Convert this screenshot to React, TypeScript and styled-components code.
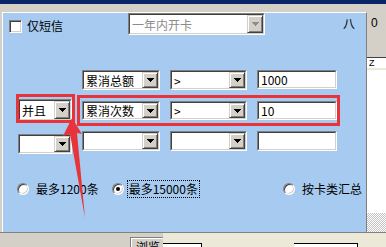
import React from 'react';
import styled, { createGlobalStyle } from 'styled-components';

const GlobalStyle = createGlobalStyle`
  html, body {
    margin: 0;
    padding: 0;
    background: #d4d0c8;
  }

  body {
    font-family: "Noto Sans CJK SC", "Liberation Sans", sans-serif;
    font-size: 12px;
    color: #000;
  }
`;

const Screen = styled.div`
  position: relative;
  width: 386px;
  height: 247px;
  overflow: hidden;
  display: flex;
  flex-direction: column;
  background: #d4d0c8;
`;

const TitleBar = styled.div`
  height: 4px;
  background: #0a246a;
`;

const Middle = styled.div`
  display: flex;
  height: 228px;
`;

const PanelArea = styled.div`
  width: 367px;
  padding: 8px 0 0 2px;
  box-sizing: border-box;
`;

const Panel = styled.div`
  height: 220px;
  box-sizing: border-box;
  background: #a6caf0;
  border-left: 1px solid #fff;
  border-top: 1px solid #fff;
  border-right: 1px solid #808080;
`;

const TopRow = styled.div`
  display: flex;
  align-items: center;
  height: 22px;
  padding-left: 6px;
`;

const CheckBox = styled.span`
  width: 13px;
  height: 13px;
  margin-top: 4px;
  box-sizing: border-box;
  background: #fff;
  border: 1px solid;
  border-color: #808080 #fff #fff #808080;
  box-shadow: inset 1px 1px #404040, inset -1px -1px #d4d0c8;
`;

const CheckLabel = styled.span`
  width: 101px;
  margin-left: 5px;
  margin-top: 4px;
  line-height: 16px;
`;

const EightMark = styled.span`
  margin-left: 78px;
  margin-top: -1px;
  line-height: 16px;
`;

const Sunken = styled.div<{ $w: number; $h: number; $dy?: number }>`
  width: ${({ $w }) => $w}px;
  height: ${({ $h }) => $h}px;
  margin-top: ${({ $dy }) => $dy ?? 0}px;
  box-sizing: border-box;
  flex-shrink: 0;
  background: #fff;
  border: 1px solid;
  border-color: #808080 #fff #fff #808080;
  display: flex;
`;

const SunkenInner = styled.div`
  flex: 1;
  display: flex;
  align-items: center;
  min-width: 0;
  border: 1px solid;
  border-color: #404040 #d4d0c8 #d4d0c8 #404040;
`;

const FieldText = styled.span<{ $disabled?: boolean }>`
  flex: 1;
  padding-left: 2px;
  line-height: 15px;
  white-space: nowrap;
  color: ${({ $disabled }) => ($disabled ? '#8c8c8c' : '#000')};
`;

const DropButton = styled.span`
  width: 16px;
  align-self: stretch;
  box-sizing: border-box;
  flex-shrink: 0;
  display: flex;
  align-items: center;
  justify-content: center;
  background: #d4d0c8;
  border: 1px solid;
  border-color: #d4d0c8 #404040 #404040 #d4d0c8;
  box-shadow: inset 1px 1px #fff, inset -1px -1px #808080;
`;

const ConditionRow = styled.div<{ $top: number }>`
  display: flex;
  align-items: flex-start;
  gap: 10px;
  margin-top: ${({ $top }) => $top}px;
  padding-left: 15px;
`;

const Slot = styled.div`
  width: 54px;
  flex-shrink: 0;
`;

const RadioRow = styled.div`
  display: flex;
  align-items: center;
  height: 16px;
  margin-top: 27px;
  padding-left: 14px;
`;

const RadioItem = styled.label<{ $left?: number }>`
  display: flex;
  align-items: center;
  margin-left: ${({ $left }) => $left ?? 0}px;
`;

const RadioDot = styled.span<{ $checked?: boolean }>`
  position: relative;
  width: 12px;
  height: 12px;
  box-sizing: border-box;
  border-radius: 50%;
  background: #fff;
  border: 1px solid;
  border-color: #808080 #fff #fff #808080;
  box-shadow: inset 1px 1px #404040, inset -1px -1px #d4d0c8;

  &::after {
    content: '';
    display: ${({ $checked }) => ($checked ? 'block' : 'none')};
    position: absolute;
    left: 3px;
    top: 3px;
    width: 4px;
    height: 4px;
    border-radius: 50%;
    background: #000;
  }
`;

const RadioText = styled.span<{ $focused?: boolean }>`
  margin-left: ${({ $focused }) => ($focused ? 3 : 5)}px;
  padding: 0 1px;
  line-height: 16px;
  border: 1px dotted ${({ $focused }) => ($focused ? '#000' : 'transparent')};
`;

const RightStrip = styled.div`
  width: 19px;
  display: flex;
  flex-direction: column;
`;

const StripTop = styled.div`
  height: 53px;
  padding: 12px 0 0 4px;
  box-sizing: border-box;
  font-family: "Liberation Sans", sans-serif;
  font-size: 12px;
`;

const StripList = styled.div`
  flex: 1;
  background: #fff;
  border-top: 1px solid #404040;
`;

const StripHead = styled.div`
  height: 10px;
  padding-left: 2px;
  border-bottom: 2px solid #ece9d8;
  font-family: "Liberation Sans", sans-serif;
  font-size: 9px;
  line-height: 10px;
`;

const StripChecker = styled.div`
  height: 19px;
  background: repeating-conic-gradient(#c4c4c4 0 25%, #fff 0 50%) 0 0 / 2px 2px;
`;

const BottomBar = styled.div`
  display: flex;
  height: 15px;
  box-sizing: border-box;
  border-top: 1px solid #808080;
`;

const BottomGrey = styled.div`
  width: 130px;
`;

const GroupTab = styled.div`
  width: 32px;
  margin-top: 4px;
  border-top: 1px solid #808080;
  border-left: 1px solid #808080;
  box-shadow: inset 1px 1px #fff;
`;

const GroupLabel = styled.span`
  display: inline-block;
  margin: -6px 0 0 4px;
  padding: 0 1px;
  background: #d4d0c8;
  line-height: 14px;
`;

const BeigeArea = styled.div`
  flex: 1;
  display: flex;
  background: #ece9d8;
`;

const WhiteBox = styled.div<{ $w: number; $left: number }>`
  width: ${({ $w }) => $w}px;
  margin-left: ${({ $left }) => $left}px;
  margin-top: 10px;
  background: #fff;
  border-top: 1px solid #000;
  border-right: 1px solid #000;
`;

const Overlay = styled.svg`
  position: absolute;
  left: 0;
  top: 0;
  pointer-events: none;
`;

function Combo({ w, h = 21, dy, text, disabled }: { w: number; h?: number; dy?: number; text?: string; disabled?: boolean }) {
  return (
    <Sunken $w={w} $h={h} $dy={dy}>
      <SunkenInner>
        <FieldText $disabled={disabled}>{text}</FieldText>
        <DropButton>
          <svg width='7' height='4' viewBox='0 0 7 4'>
            <path d='M0 0h7v1H0zM1 1h5v1H1zM2 2h3v1H2zM3 3h1v1H3z' fill={disabled ? '#8c8c8c' : '#000'} />
          </svg>
        </DropButton>
      </SunkenInner>
    </Sunken>
  );
}

function TextBox({ w, h = 20, dy, text }: { w: number; h?: number; dy?: number; text?: string }) {
  return (
    <Sunken $w={w} $h={h} $dy={dy}>
      <SunkenInner>
        <FieldText>{text}</FieldText>
      </SunkenInner>
    </Sunken>
  );
}

export default function App() {
  return (
    <>
      <GlobalStyle />
      <Screen>
        <TitleBar />
        <Middle>
          <PanelArea>
            <Panel>
              <TopRow>
                <CheckBox />
                <CheckLabel>仅短信</CheckLabel>
                <Combo w={137} h={22} text='一年内开卡' disabled />
                <EightMark>八</EightMark>
              </TopRow>

              <ConditionRow $top={35}>
                <Slot />
                <Combo w={78} h={20} text='累消总额' />
                <Combo w={77} h={20} text='>' />
                <TextBox w={80} h={19} text='1000' />
              </ConditionRow>

              <ConditionRow $top={9}>
                <Combo w={54} h={22} text='并且' />
                <Combo w={78} h={19} dy={2} text='累消次数' />
                <Combo w={77} h={19} dy={2} text='>' />
                <TextBox w={80} h={19} dy={2} text='10' />
              </ConditionRow>

              <ConditionRow $top={10}>
                <Combo w={54} h={20} dy={3} />
                <Combo w={78} h={20} />
                <Combo w={77} h={20} />
                <TextBox w={80} h={20} />
              </ConditionRow>

              <RadioRow>
                <RadioItem>
                  <RadioDot />
                  <RadioText>最多1200条</RadioText>
                </RadioItem>
                <RadioItem $left={11}>
                  <RadioDot $checked />
                  <RadioText $focused>最多15000条</RadioText>
                </RadioItem>
                <RadioItem $left={83}>
                  <RadioDot />
                  <RadioText>按卡类汇总</RadioText>
                </RadioItem>
              </RadioRow>
            </Panel>
          </PanelArea>

          <RightStrip>
            <StripTop>0</StripTop>
            <StripList>
              <StripHead>Z</StripHead>
            </StripList>
            <StripChecker />
          </RightStrip>
        </Middle>

        <BottomBar>
          <BottomGrey />
          <GroupTab>
            <GroupLabel>浏览</GroupLabel>
          </GroupTab>
          <BeigeArea>
            <WhiteBox $w={38} $left={0} />
            <WhiteBox $w={63} $left={92} />
          </BeigeArea>
        </BottomBar>

        <Overlay width='386' height='247' viewBox='0 0 386 247'>
          <rect x='17.5' y='95.5' width='56' height='26' fill='none' stroke='#e8333a' strokeWidth='3' />
          <rect x='78.5' y='96.5' width='260' height='28' fill='none' stroke='#e8333a' strokeWidth='3' />
          <polygon points='72,118 82,134 77,133 85,218 70,134 63,136' fill='#e8333a' />
        </Overlay>
      </Screen>
    </>
  );
}
